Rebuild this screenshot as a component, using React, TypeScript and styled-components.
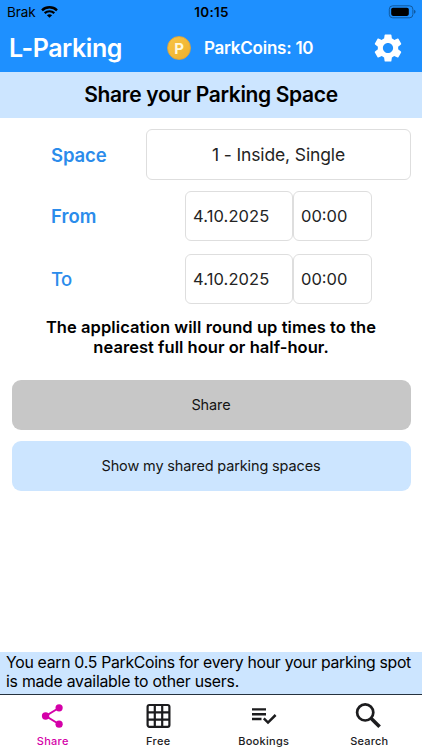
import React from "react";
import styled, { createGlobalStyle } from "styled-components";
import { MdSettings } from "react-icons/md";

const GlobalStyle = createGlobalStyle`
  * { box-sizing: border-box; }
  body { margin: 0; background: #fff; }
`;

const Screen = styled.div`
  width: 422px;
  height: 750px;
  display: flex;
  flex-direction: column;
  overflow: hidden;
  background: #fff;
  color: #000;
  font-family: Inter, "Liberation Sans", sans-serif;
`;

const Text = styled.span<{ $size: number; $weight?: number; $spacing?: number; $color?: string }>`
  font-size: ${(p) => p.$size}px;
  font-weight: ${(p) => p.$weight ?? 400};
  letter-spacing: ${(p) => p.$spacing ?? 0}px;
  color: ${(p) => p.$color ?? "inherit"};
  white-space: nowrap;
`;

const StatusBar = styled.div`
  height: 24px;
  flex: none;
  display: grid;
  grid-template-columns: 1fr auto 1fr;
  align-items: center;
  padding: 0 6px 1px 7px;
  background: #1e90ff;
`;

const Carrier = styled.div`
  display: flex;
  align-items: center;
  gap: 5px;
`;

const BatterySlot = styled.div`
  display: flex;
  justify-content: flex-end;
`;

const Header = styled.header`
  height: 48px;
  flex: none;
  display: flex;
  align-items: center;
  padding: 0 17px 0 9px;
  background: #1e90ff;
  color: #fff;
`;

const Brand = styled.div`
  width: 158px;
`;

const Balance = styled.div`
  flex: 1;
  display: flex;
  align-items: center;
  gap: 13px;
`;

const Coin = styled.div`
  width: 24px;
  height: 24px;
  border-radius: 50%;
  border: 1.5px solid #d9a441;
  background: linear-gradient(135deg, #f8c444, #efb02c);
  display: flex;
  align-items: center;
  justify-content: center;
`;

const TitleBar = styled.div`
  height: 46px;
  flex: none;
  display: flex;
  align-items: center;
  justify-content: center;
  padding-bottom: 2px;
  background: #cce5ff;
`;

const Form = styled.main`
  flex: 1;
  display: flex;
  flex-direction: column;
  padding: 11px 11px 0;
`;

const Row = styled.div<{ $gap: number }>`
  display: flex;
  align-items: center;
  margin-bottom: ${(p) => p.$gap}px;
`;

const Label = styled.div<{ $width: number }>`
  width: ${(p) => p.$width}px;
  padding-left: 40px;
`;

const Field = styled.div<{ $width: number; $height?: number; $center?: boolean }>`
  width: ${(p) => p.$width}px;
  height: ${(p) => p.$height ?? 50}px;
  display: flex;
  align-items: center;
  justify-content: ${(p) => (p.$center ? "center" : "flex-start")};
  padding-left: ${(p) => (p.$center ? 0 : 7)}px;
  border: 1px solid #dedede;
  border-radius: 6px;
  color: #242424;
`;

const Note = styled.p`
  margin: 0 0 23px;
  display: flex;
  flex-direction: column;
  align-items: center;
  line-height: 20px;
`;

const Button = styled.button<{ $bg: string }>`
  height: 50px;
  margin: 0 0.5px 11px;
  padding: 0 0 1px;
  border: 0;
  border-radius: 9px;
  background: ${(p) => p.$bg};
  color: #151515;
  font-family: inherit;
`;

const Info = styled.div`
  height: 43px;
  flex: none;
  display: flex;
  flex-direction: column;
  padding: 2px 0 0 6px;
  line-height: 18.5px;
  background: #cce5ff;
  border-bottom: 1px solid #26323e;
`;

const TabBar = styled.nav`
  height: 55px;
  flex: none;
  display: grid;
  grid-template-columns: repeat(4, 1fr);
`;

const Tab = styled.div<{ $active?: boolean }>`
  display: flex;
  flex-direction: column;
  align-items: center;
  padding-top: 6px;
  color: ${(p) => (p.$active ? "#d400a8" : "#1c1c1e")};
`;

const TabIcon = styled.div`
  height: 30px;
  display: flex;
  align-items: center;
  justify-content: center;
  margin-bottom: 3px;
`;

const WifiIcon = () => (
  <svg width="17" height="12" viewBox="0 0 17 12" fill="none" stroke="#000">
    <path d="M1 4.3C5.2 0.3 11.8 0.3 16 4.3" strokeWidth="2.4" />
    <path d="M3.7 7.1C6.4 4.6 10.6 4.6 13.3 7.1" strokeWidth="2.2" />
    <path d="M8.5 11.8L5.9 9.2Q8.5 7.2 11.1 9.2Z" fill="#000" stroke="none" />
  </svg>
);

const BatteryIcon = () => (
  <svg width="28" height="14" viewBox="0 0 28 14">
    <rect x="1.3" y="0.8" width="23.6" height="12" rx="3.4" fill="none" stroke="#0f599f" strokeWidth="1" />
    <rect x="3.2" y="2.7" width="17.6" height="8.2" rx="1.8" fill="#000" />
    <path d="M26 4.8Q27.6 5.3 27.6 6.8T26 8.8Z" fill="#0f599f" />
  </svg>
);

const ShareIcon = () => (
  <svg width="24" height="26" viewBox="0 0 24 26" fill="currentColor">
    <path d="M17.8 5L4.8 13L17.8 21" fill="none" stroke="currentColor" strokeWidth="2" />
    <circle cx="18.1" cy="4.8" r="3.6" />
    <circle cx="4.6" cy="13" r="3.7" />
    <circle cx="18.1" cy="21.2" r="3.6" />
  </svg>
);

const GridIcon = () => (
  <svg width="26" height="26" viewBox="0 0 26 26" fill="none" stroke="currentColor" strokeWidth="2.2">
    <rect x="2.6" y="2" width="21.8" height="21.8" rx="1.8" />
    <path d="M9.8 2v22M17.2 2v22M2.6 9.3h22M2.6 16.6h22" />
  </svg>
);

const ChecklistIcon = () => (
  <svg width="26" height="18" viewBox="0 0 26 18" fill="none" stroke="currentColor" strokeWidth="2.4">
    <path d="M1 2.4h14M1 7.2h14M1 12h9.5" />
    <path d="M12.8 11.4l4.2 4.2 7.6-7.6" strokeWidth="2.5" />
  </svg>
);

const SearchIcon = () => (
  <svg width="28" height="28" viewBox="0 0 28 28" fill="none" stroke="currentColor">
    <circle cx="10.2" cy="10.4" r="8.1" strokeWidth="2.7" />
    <path d="M16 16.2L24.6 24.8" strokeWidth="3.6" />
  </svg>
);

const blue = "#2b8ceb";

export default function App() {
  return (
    <>
      <GlobalStyle />
      <Screen>
        <StatusBar>
          <Carrier>
            <Text $size={13.5} $spacing={-0.1}>Brak</Text>
            <WifiIcon />
          </Carrier>
          <Text $size={13.5} $weight={600} $spacing={0.25}>10:15</Text>
          <BatterySlot><BatteryIcon /></BatterySlot>
        </StatusBar>
        <Header>
          <Brand><Text $size={25} $weight={600} $spacing={-0.42}>L-Parking</Text></Brand>
          <Balance>
            <Coin><Text $size={15} $weight={700} $color="#fff8dc">P</Text></Coin>
            <Text $size={17} $weight={600} $spacing={-0.24}>ParkCoins: 10</Text>
          </Balance>
          <MdSettings size={34} />
        </Header>
        <TitleBar>
          <Text $size={21} $weight={600} $spacing={-0.35}>Share your Parking Space</Text>
        </TitleBar>
        <Form>
          <Row $gap={11}>
            <Label $width={135}><Text $size={18.5} $weight={600} $spacing={-0.1} $color={blue}>Space</Text></Label>
            <Field $width={265} $height={51} $center><Text $size={17.5} $spacing={-0.13}>1 - Inside, Single</Text></Field>
          </Row>
          <Row $gap={13}>
            <Label $width={174}><Text $size={18.5} $weight={600} $color={blue}>From</Text></Label>
            <Field $width={108}><Text $size={16.5} $spacing={0.1}>4.10.2025</Text></Field>
            <Field $width={79}><Text $size={16.5}>00:00</Text></Field>
          </Row>
          <Row $gap={13}>
            <Label $width={174}><Text $size={18.5} $weight={500} $spacing={-0.6} $color={blue}>To</Text></Label>
            <Field $width={108}><Text $size={16.5} $spacing={0.1}>4.10.2025</Text></Field>
            <Field $width={79}><Text $size={16.5}>00:00</Text></Field>
          </Row>
          <Note>
            <Text $size={16.5} $weight={600} $spacing={0.07}>The application will round up times to the</Text>
            <Text $size={16.5} $weight={600} $spacing={0.04}>nearest full hour or half-hour.</Text>
          </Note>
          <Button $bg="#c7c7c7"><Text $size={14.5} $spacing={-0.1}>Share</Text></Button>
          <Button $bg="#cce5ff"><Text $size={14.5} $spacing={-0.14}>Show my shared parking spaces</Text></Button>
        </Form>
        <Info>
          <Text $size={15.8} $spacing={-0.29}>You earn 0.5 ParkCoins for every hour your parking spot</Text>
          <Text $size={15.8} $spacing={-0.24}>is made available to other users.</Text>
        </Info>
        <TabBar>
          <Tab $active>
            <TabIcon><ShareIcon /></TabIcon>
            <Text $size={11} $weight={500} $spacing={0.3}>Share</Text>
          </Tab>
          <Tab>
            <TabIcon><GridIcon /></TabIcon>
            <Text $size={11} $weight={500} $spacing={0.3}>Free</Text>
          </Tab>
          <Tab>
            <TabIcon><ChecklistIcon /></TabIcon>
            <Text $size={11} $weight={500} $spacing={0.3}>Bookings</Text>
          </Tab>
          <Tab>
            <TabIcon><SearchIcon /></TabIcon>
            <Text $size={11} $weight={500} $spacing={0.2}>Search</Text>
          </Tab>
        </TabBar>
      </Screen>
    </>
  );
}
